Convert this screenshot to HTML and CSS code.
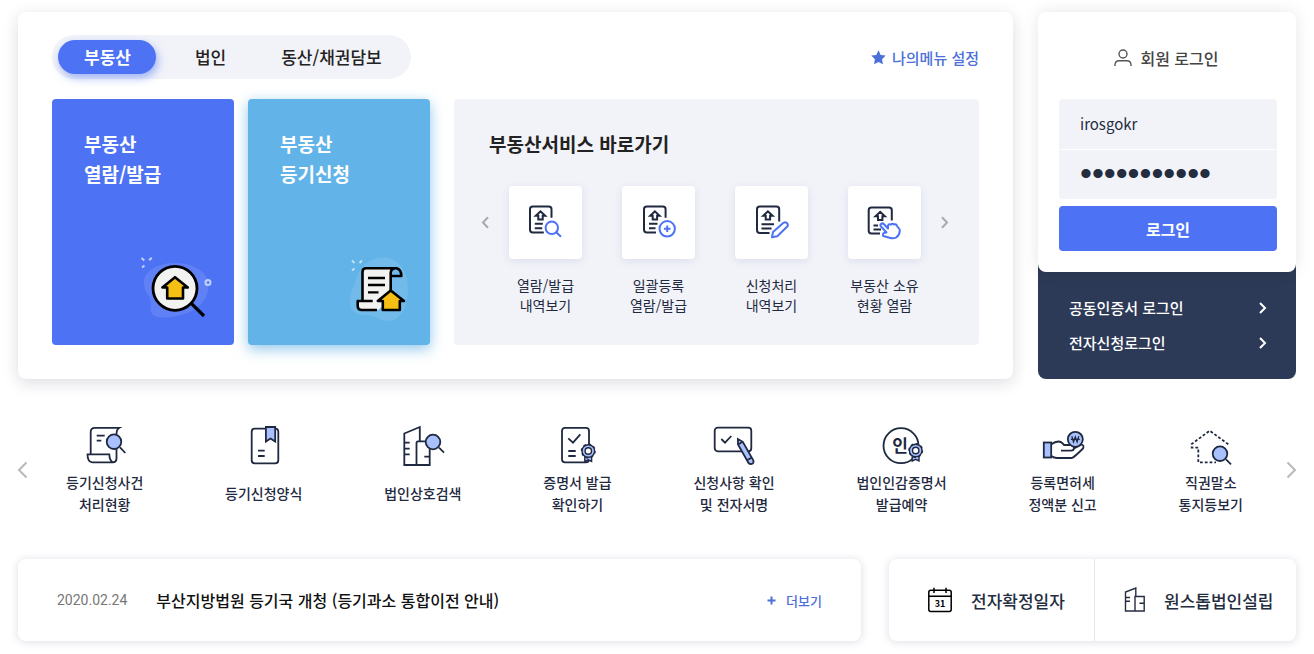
FILE: index.html
```html
<!DOCTYPE html>
<html lang="ko">
<head>
<meta charset="utf-8">
<meta name="viewport" content="width=device-width, initial-scale=1">
<title>인터넷등기소</title>
<link rel="stylesheet" href="styles.css">
</head>
<body>
<svg class="defs" width="0" height="0" aria-hidden="true">
  <symbol id="medal" viewBox="0 0 18 20">
    <path d="M5.500 12.500V18.500L8.800 16.800L12.300 18.500V12.500Z" fill="#a9c1ff" stroke="#1f2940" stroke-width="1.400"/>
    <circle cx="9" cy="8" r="6.300" fill="#a9c1ff" stroke="#1f2940" stroke-width="1.400"/>
    <circle cx="9" cy="8" r="6.900" fill="none" stroke="#1f2940" stroke-width="1.200" stroke-dasharray="2.700 2.700"/>
    <circle cx="9" cy="8" r="3.200" fill="#fff" stroke="#1f2940" stroke-width="1.400"/>
  </symbol>
</svg>
<main class="page">
  <div class="top">
    <section class="service-card">
      <div class="service-head">
        <div class="tabs">
          <button class="tab tab-on" type="button">부동산</button>
          <button class="tab" type="button">법인</button>
          <button class="tab" type="button">동산/채권담보</button>
        </div>
        <a class="my-menu" href="#">
          <svg width="15" height="15" viewBox="0 0 15 15" aria-hidden="true"><path d="M7.500.300 9.700 4.900 14.700 5.600 11.100 9.200 11.900 14.200 7.500 11.900 3.100 14.200 3.900 9.200.300 5.600 5.300 4.900Z" fill="#4d6fd8"/></svg>
          나의메뉴 설정
        </a>
      </div>
      <div class="service-body">
        <a class="tile tile-view" href="#">
          <span>부동산<br>열람/발급</span>
          <svg class="tile-icon" width="72" height="64" viewBox="0 0 72 64" aria-hidden="true">
            <path d="M4 25C5 14 18 8 32 7C46 6 64 11 68 25C71 38 62 52 47 57C36 61 20 64 13 59C8 54 13 46 9 40C5 35 4 31 4 25Z" fill="#fff" opacity=".1"/>
            <g stroke="#c3d0ff" stroke-width="2" fill="none"><path d="M1.500 2 4.300 4.500M11.700 1.700 9.200 4.200M2 11.500 4.500 9.500"/><circle cx="68" cy="26.500" r="2.500"/></g>
            <path d="M51.300 47.300 64 60" stroke="#000" stroke-width="3.200"/>
            <circle cx="35" cy="32.300" r="22" fill="#f2f2f0" stroke="#000" stroke-width="2.800"/>
            <path d="M27.200 31.500V42.500H43V31.500H47.800L35 21.200 22.400 31.500Z" fill="#f5bf14" stroke="#000" stroke-width="2.600" stroke-linejoin="round"/>
          </svg>
        </a>
        <a class="tile tile-apply" href="#">
          <span>부동산<br>등기신청</span>
          <svg class="tile-icon" width="62" height="66" viewBox="0 0 62 66" aria-hidden="true">
            <path d="M2 46C2 34 7 28 10 18C15 6 27 1 37 1.500C52 3 60 16 60 33C60 51 52 66 40 65C30 64 27 58 15 59C6 59 2 54 2 46Z" fill="#fff" opacity=".1"/>
            <path d="M4 4.500 6.500 7M14 4.500 11.500 7M4 14.500 6.500 12.500" stroke="#c2e2f7" stroke-width="2" fill="none"/>
            <g stroke="#000" stroke-width="2.600" stroke-linejoin="round">
              <path d="M18 12.300H46Q42.700 13.500 42.700 18V44L30 54H14Q9.700 54 9.700 50V45H14.500V16Q14.500 12.300 18 12.300Z" fill="#f2f2f0" stroke="none"/>
              <path d="M29 54H14Q9.700 54 9.700 50V45H24.700M14.500 45V16Q14.500 12.300 18 12.300H48.500Q53.300 13.500 53.300 20H42.700M42.700 34V17Q42.700 13 47 12.500" fill="none"/>
              <path d="M20 22H37M20 29H37M20 36.300H30.500" fill="none" stroke-width="2.300"/>
              <path d="M34.800 45V54H51.800V45H56L42.700 34.600 29.800 45Z" fill="#f5bf14"/>
            </g>
          </svg>
        </a>
        <section class="shortcuts">
          <h2>부동산서비스 바로가기</h2>
          <div class="shortcut-row">
            <button class="mini-arrow" type="button" aria-label="이전 서비스"><svg width="8" height="13" viewBox="0 0 8 13"><path d="M7 1.200 2 6.500 7 11.800"/></svg></button>
            <div class="shortcut-list">
              <a class="shortcut" href="#">
                <span class="shortcut-box"><svg width="36" height="36" viewBox="0 0 36 36" aria-hidden="true">
                  <g class="ink"><path d="M24.500 13.800V5.200Q24.500 2.500 21.800 2.500H5.800Q3 2.500 3 5.200V25.800Q3 28.500 5.800 28.500H16.800"/><path d="M11.300 15.500V11.800H8.800L13.500 7.300 18.200 11.800H15.700V15.500Z"/><path d="M7.800 19.800H15.800M7.800 24.200H15.200"/></g>
                  <g class="blue"><circle cx="24.800" cy="23.800" r="6.200"/><path d="M29.300 28.300 34 32.700"/></g></svg></span>
                <span>열람/발급<br>내역보기</span>
              </a>
              <a class="shortcut" href="#">
                <span class="shortcut-box"><svg width="36" height="36" viewBox="0 0 36 36" aria-hidden="true">
                  <g class="ink"><path d="M25.600 13.800V5.200Q25.600 2.500 22.900 2.500H6.800Q4 2.500 4 5.200V25.800Q4 28.500 6.800 28.500H16"/><path d="M12.700 15.500V11.800H10.200L14.900 7.300 19.600 11.800H17.100V15.500Z"/><path d="M9 19.800H17.500M9 24.200H15.500"/></g>
                  <g class="blue"><circle cx="27.200" cy="24.800" r="7.700"/><path d="M27.200 21.500V28.100M23.900 24.800H30.500"/></g></svg></span>
                <span>일괄등록<br>열람/발급</span>
              </a>
              <a class="shortcut" href="#">
                <span class="shortcut-box"><svg width="36" height="36" viewBox="0 0 36 36" aria-hidden="true">
                  <g class="ink"><path d="M26.200 17.500V5.200Q26.200 2.500 23.500 2.500H6.800Q4 2.500 4 5.200V26.300Q4 29 6.800 29H16.500"/><path d="M12.700 15.500V11.800H10.200L14.900 7.300 19.600 11.800H17.100V15.500Z"/><path d="M8.500 20.200H21M8.500 24.500H18.500"/></g>
                  <path class="blue" d="M19 33.200 20 28 30.500 18.800Q32.300 17.700 34 19.200 35.500 20.800 34.500 22.300L24.300 32.200Z"/></svg></span>
                <span>신청처리<br>내역보기</span>
              </a>
              <a class="shortcut" href="#">
                <span class="shortcut-box"><svg width="36" height="36" viewBox="0 0 36 36" aria-hidden="true">
                  <g class="ink"><path d="M25.800 16.500V6.200Q25.800 3.500 23.100 3.500H5.400Q2.700 3.500 2.700 6.200V26.800Q2.700 29.500 5.400 29.500H14"/><path d="M12 16V12.300H9.500L14.200 7.800 18.900 12.300H16.400V16Z"/><path d="M7.500 21.500H12M7.500 25.500H15"/></g>
                  <path class="blue" d="M15 20Q16.500 18.700 18 20.200L22 24.500 22 21.500Q23.200 19.500 25 20.600 26.500 19 28.300 20.600 30.200 19.700 31 22L33.700 25.500Q34.300 30 30.500 33.300 27 35 23.500 33.800L17.300 32Q16 29.600 18.500 28.800L20.500 28.500 15 22.500Q13.800 21.300 15 20Z"/></svg></span>
                <span>부동산 소유<br>현황 열람</span>
              </a>
            </div>
            <button class="mini-arrow" type="button" aria-label="다음 서비스"><svg width="8" height="13" viewBox="0 0 8 13"><path d="M1 1.200 6 6.500 1 11.800"/></svg></button>
          </div>
        </section>
      </div>
    </section>

    <aside class="login">
      <form class="login-form">
        <h2><svg width="18" height="18" viewBox="0 0 18 18" aria-hidden="true"><circle cx="9" cy="5" r="4"/><path d="M1 17V15.500Q1.500 11.800 5 11.800H13Q16.500 11.800 17 15.500V17"/></svg>회원 로그인</h2>
        <input class="field" type="text" value="irosgokr" aria-label="아이디">
        <input class="field field-secret" type="password" value="abcdefghijk" aria-label="비밀번호">
        <button class="submit" type="button">로그인</button>
      </form>
      <nav class="login-links">
        <a href="#">공동인증서 로그인<svg width="8" height="12" viewBox="0 0 8 12" aria-hidden="true"><path d="M1 1 6 6 1 11"/></svg></a>
        <a href="#">전자신청로그인<svg width="8" height="12" viewBox="0 0 8 12" aria-hidden="true"><path d="M1 1 6 6 1 11"/></svg></a>
      </nav>
    </aside>
  </div>

  <nav class="strip">
    <button class="strip-arrow" type="button" aria-label="이전"><svg width="10" height="18" viewBox="0 0 10 18"><path d="M8.500 1.500 1 9 8.500 16.500"/></svg></button>
    <div class="strip-list">
      <a class="menu" href="#">
        <svg class="menu-icon" viewBox="0 0 44 42" aria-hidden="true"><path d="M7.700 29V7Q7.700 2.800 12 2.800H36.300Q33.500 4.500 33.500 9M33.500 24V34Q33 37.300 30 37.300H9.500Q4.500 37.300 4.500 29.300H26.300Q26.500 36 30 37.300M13.700 10.700H21.700M13.700 15.700H18.300"/><circle class="fill" cx="31" cy="16.700" r="7.300"/><path d="M37 22.300 42.300 28"/></svg>
        <span>등기신청사건<br>처리현황</span></a>
      <a class="menu" href="#">
        <svg class="menu-icon" viewBox="0 0 44 42" aria-hidden="true"><rect x="9.700" y="3.700" width="26.600" height="34.600" rx="3"/><path class="fill" d="M23.900 2H33.200V16.500L28.500 13.500 23.900 16.500Z"/><path d="M16 25.700H22.700M16 31H22.700"/></svg>
        <span>등기신청양식</span></a>
      <a class="menu" href="#">
        <svg class="menu-icon" viewBox="0 0 44 42" aria-hidden="true"><path d="M15.500 40H3.300V8.500L18.800 2V16.300M15.500 40V18Q15.500 16.300 17 16.300H27.200Q28.700 16.300 28.700 18V40H15.500M3.300 17.700H8.700M3.300 23.700H8.700M3.300 29.300H8.700M23.300 31.700H28.700"/><circle class="fill" cx="32" cy="17" r="7.300"/><path d="M38 22.700 43 27.700"/></svg>
        <span>법인상호검색</span></a>
      <a class="menu" href="#">
        <svg class="menu-icon" viewBox="0 0 44 42" aria-hidden="true"><rect x="7" y="2.800" width="27" height="34.500" rx="3"/><path d="M13.300 13.300 18 17.700 25.300 9.300M13.300 26H20.700M13.300 31H20.700"/><use href="#medal" x="24.300" y="18" width="18" height="20"/></svg>
        <span>증명서 발급<br>확인하기</span></a>
      <a class="menu" href="#">
        <svg class="menu-icon" viewBox="0 0 44 42" aria-hidden="true"><rect x="2.700" y="2.700" width="36.600" height="23.600" rx="3"/><path d="M9.300 14 13 17.700 19.300 11"/><path class="fill" d="M25.900 14 26 19.500 36.500 38Q38.500 40 41 38.300 42 37 41.300 35.300L30.800 16.800ZM26 19.500 30.800 16.800M35 35.300 39.800 32.500"/></svg>
        <span>신청사항 확인<br>및 전자서명</span></a>
      <a class="menu" href="#">
        <svg class="menu-icon" viewBox="0 0 44 42" aria-hidden="true"><circle cx="21" cy="20.700" r="17.500"/><text class="seal" x="20" y="27" text-anchor="middle">인</text><use href="#medal" x="26.700" y="17.500" width="18" height="20"/></svg>
        <span>법인인감증명서<br>발급예약</span></a>
      <a class="menu" href="#">
        <svg class="menu-icon" viewBox="0 0 44 42" aria-hidden="true"><rect class="fill" x="2.800" y="17.500" width="7.400" height="15"/><path d="M10.300 19.300Q14 16.500 17.500 16.500 20.500 16.500 23 20H30Q33 20.500 33 23 33 25.700 30 25.700H20M10.300 31Q13 33 16 33H31Q33.500 32 42 23.500 43.500 20.500 40.500 19.500L33 23.500"/><circle class="fill" cx="34.300" cy="14.300" r="7.500"/><path d="M30.800 11.300 32.500 17 34.300 12 36.100 17 37.800 11.300M29.800 14.300H38.800" stroke-width="1.300"/></svg>
        <span>등록면허세<br>정액분 신고</span></a>
      <a class="menu" href="#">
        <svg class="menu-icon" viewBox="0 0 44 42" aria-hidden="true"><path stroke-dasharray="2.800 2" d="M39.300 19.300 20.700 5.700 2.700 19V22.700H9.300V37.300H27"/><circle class="fill" cx="31" cy="28.700" r="7.300"/><path d="M37 34.300 42 39.300"/></svg>
        <span>직권말소<br>통지등보기</span></a>
    </div>
    <button class="strip-arrow" type="button" aria-label="다음"><svg width="10" height="18" viewBox="0 0 10 18"><path d="M1.500 1.500 9 9 1.500 16.500"/></svg></button>
  </nav>

  <div class="bottom">
    <section class="notice">
      <time datetime="2020-02-24">2020.02.24</time>
      <a class="notice-title" href="#">부산지방법원 등기국 개청 (등기과소 통합이전 안내)</a>
      <a class="more" href="#"><svg width="9" height="9" viewBox="0 0 9 9" aria-hidden="true"><path d="M4.500 .500V8.500M.500 4.500H8.500"/></svg>더보기</a>
    </section>
    <nav class="quick">
      <a href="#"><svg width="26" height="26" viewBox="0 0 26 26" aria-hidden="true"><g fill="none" stroke="#000" stroke-width="1.500"><rect x="1.800" y="3.300" width="22.400" height="21.200" rx="2"/><path d="M1.800 9.300H24.200M7 .800V6M19 .800V6"/></g><text class="cal-day" x="13" y="20" text-anchor="middle">31</text></svg>전자확정일자</a>
      <a href="#"><svg width="22" height="26" viewBox="0 0 22 26" aria-hidden="true"><g fill="none" stroke="#242c40" stroke-width="1.400"><path d="M11 24H1.500V5L11.800 1V9.500M11 24V9.500H20.200V24H11M1.500 10.500H6M1.500 14.300H6M15.500 16.300H20.200"/></g></svg>원스톱법인설립</a>
    </nav>
  </div>
</main>
</body>
</html>
```

FILE: styles.css
```css
* { box-sizing: border-box; }

body {
  margin: 0;
  background: #fff;
  color: #1f2940;
  font-family: "Noto Sans CJK KR", "Noto Sans", sans-serif;
  font-size: 14px;
}

a { color: inherit; text-decoration: none; }

button, input {
  margin: 0;
  border: 0;
  background: none;
  color: inherit;
  font: inherit;
}

button { padding: 0; cursor: pointer; }
h2 { margin: 0; }
.defs { position: absolute; }

.page { padding: 12px 18px; }

.top { display: flex; gap: 25px; }

.service-card {
  flex: 1;
  padding: 23px 34px 34px;
  border-radius: 8px;
  background: #fff;
  box-shadow: 0 4px 16px rgba(30, 30, 70, 0.15);
}

.service-head {
  display: flex;
  align-items: center;
  justify-content: space-between;
  margin-bottom: 20px;
}

.tabs {
  display: flex;
  padding: 5px 6px;
  border-radius: 22px;
  background: #f2f3f9;
}

.tab {
  height: 34px;
  padding: 0 23px;
  border-radius: 17px;
  color: #222;
  font-size: 17px;
  font-weight: 500;
  line-height: 34px;
}

.tab:nth-child(2) { padding: 0 32px 0 39px; }

.tab-on {
  padding: 0 25px 0 26px;
  background: #4d73f4;
  box-shadow: 2px 4px 8px rgba(77, 115, 244, 0.5);
  color: #fff;
  font-weight: 700;
}

.my-menu {
  display: flex;
  align-items: center;
  gap: 6px;
  color: #4d6fd8;
  font-size: 15px;
  font-weight: 500;
}

.service-body { display: flex; }

.tile {
  display: flex;
  flex-direction: column;
  justify-content: space-between;
  width: 182px;
  margin-right: 14px;
  padding: 30px 22px 25px 32px;
  border-radius: 4px;
  color: #fff;
  font-size: 19px;
  font-weight: 700;
  line-height: 30px;
}

.tile-icon { align-self: flex-end; }
.tile-view { background: #4d73f4; }

.tile-apply {
  margin-right: 24px;
  padding: 30px 20px 23px 32px;
  background: #61b3e8;
  box-shadow: 0 4px 14px rgba(70, 160, 220, 0.6);
}

.shortcuts {
  flex: 1;
  padding: 30px 30px 30px 27px;
  border-radius: 4px;
  background: #f2f3f9;
}

.shortcuts h2 {
  margin: 0 0 27px 8px;
  color: #222;
  font-size: 19px;
  font-weight: 700;
  line-height: 30px;
}

.shortcut-row { display: flex; align-items: flex-start; }

.mini-arrow {
  display: flex;
  align-items: center;
  width: 8px;
  height: 73px;
}

.mini-arrow path { fill: none; stroke: #a9a9ab; stroke-width: 2; }

.shortcut-list {
  display: grid;
  flex: 1;
  grid-template-columns: repeat(4, 1fr);
}

.shortcut {
  display: flex;
  flex-direction: column;
  align-items: center;
  gap: 16px;
  line-height: 20px;
  text-align: center;
}

.shortcut-box {
  display: flex;
  align-items: center;
  justify-content: center;
  width: 73px;
  height: 73px;
  padding: 0 1px 1px 0;
  border-radius: 4px;
  background: #fff;
  box-shadow: 0 2px 8px rgba(60, 70, 140, 0.12);
}

.ink, .blue { fill: none; stroke: #1f2940; stroke-width: 2; }
.blue { stroke: #4d73f4; stroke-linejoin: round; }

.login {
  display: flex;
  flex-direction: column;
  width: 258px;
}

.login-form {
  display: flex;
  flex-direction: column;
  z-index: 1;
  padding: 31px 19px 21px 21px;
  border-radius: 8px;
  background: #fff;
  box-shadow: 0 0 16px rgba(0, 0, 0, 0.1);
}

.login-form h2 {
  display: flex;
  align-items: center;
  justify-content: center;
  gap: 8px;
  margin-bottom: 26px;
  padding-right: 3px;
  color: #444;
  font-size: 16px;
  font-weight: 500;
  line-height: 30px;
}

.login-form h2 svg { fill: none; stroke: #555; stroke-width: 1.4; }

.field {
  width: 100%;
  height: 50px;
  padding: 0 21px 2px;
  border-radius: 4px 4px 0 0;
  background: #f2f3f9;
  color: #242c40;
  font-size: 15px;
}

.field-secret {
  height: 49px;
  margin: 1px 0 7px;
  border-radius: 0 0 4px 4px;
  font-family: "Liberation Sans", sans-serif;
  font-size: 34px;
}

.submit {
  height: 45px;
  border-radius: 4px;
  background: #4d73f4;
  color: #fff;
  font-size: 16px;
  font-weight: 700;
}

.login-links {
  flex: 1;
  margin-top: -8px;
  padding: 26px 29px 19px 31px;
  border-radius: 0 0 8px 8px;
  background: #2d3a57;
}

.login-links a {
  display: flex;
  align-items: center;
  justify-content: space-between;
  color: #fff;
  font-size: 15px;
  font-weight: 500;
  line-height: 35px;
}

.login-links path { fill: none; stroke: #fff; stroke-width: 2; }

.strip {
  display: flex;
  align-items: center;
  justify-content: space-between;
  margin: 46px 0 44px;
}

.strip-arrow { display: flex; }

.strip-arrow svg { overflow: visible; }
.strip-arrow path { fill: none; stroke: #b9b9bb; stroke-width: 2; }

.strip-list {
  display: flex;
  flex: 1;
  justify-content: space-between;
  padding: 0 43px 0 38px;
}

.menu {
  display: flex;
  flex-direction: column;
  align-items: center;
  gap: 4px;
  font-weight: 500;
  line-height: 22px;
  text-align: center;
}

.menu span {
  display: flex;
  align-items: center;
  min-height: 44px;
}

.menu-icon {
  width: 44px;
  height: 42px;
  overflow: visible;
  fill: none;
  stroke: #1f2940;
  stroke-width: 1.8;
}

.menu-icon .fill { fill: #a9c1ff; }

.seal {
  fill: #1f2940;
  stroke: none;
  font-size: 17px;
  font-weight: 700;
}

.bottom { display: flex; gap: 28px; }

.notice, .quick {
  height: 82px;
  border-radius: 8px;
  background: #fff;
  box-shadow: 0 1px 8px rgba(60, 60, 130, 0.18);
}

.notice {
  display: flex;
  flex: 1;
  align-items: center;
  padding: 0 39px;
}

.notice time {
  margin-right: 29px;
  color: #777;
  font-family: Roboto, sans-serif;
}

.notice-title { color: #111; font-size: 16px; font-weight: 500; }

.more {
  display: flex;
  align-items: center;
  gap: 10px;
  margin-left: auto;
  color: #4d6fd8;
  font-size: 13px;
  font-weight: 500;
}

.more path { stroke: #4d6fd8; stroke-width: 2; }

.quick {
  display: grid;
  grid-template-columns: 205fr 202fr;
  width: 407px;
}

.quick a {
  display: flex;
  align-items: center;
  gap: 18px;
  padding-left: 38px;
  color: #242c40;
  font-size: 17px;
  font-weight: 500;
}

.quick a + a {
  padding-left: 29px;
  border-left: 1px solid #e3e4f0;
}

.cal-day { fill: #000; font-size: 9px; font-weight: 700; }
```
